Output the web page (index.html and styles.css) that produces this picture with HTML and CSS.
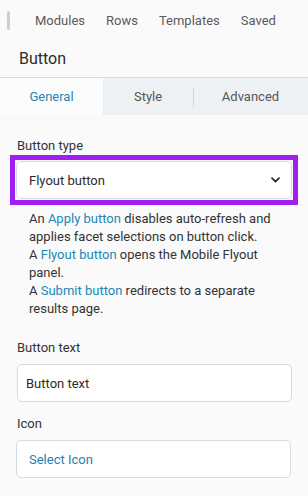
FILE: index.html
```html
<!DOCTYPE html>
<html lang="en">
<head>
<meta charset="utf-8">
<title>Button settings</title>
<link rel="stylesheet" href="styles.css">
</head>
<body>
<div class="panel">
  <nav class="topbar">
    <span class="handle"></span>
    <a class="top-link">Modules</a>
    <a class="top-link">Rows</a>
    <a class="top-link">Templates</a>
    <a class="top-link">Saved</a>
  </nav>
  <h1 class="title">Button</h1>
  <div class="tabs">
    <div class="tab tab-active">General</div>
    <div class="tab">Style</div>
    <div class="tab tab-sep">Advanced</div>
  </div>
  <div class="content">
    <div class="field">
      <label class="label">Button type</label>
      <div class="highlight">
        <div class="select">
          <span>Flyout button</span>
          <svg class="chev" width="9" height="6" viewBox="0 0 9 6"><path d="M1 1.2 L4.5 4.6 L8 1.2" fill="none" stroke="#2a2a2a" stroke-width="1.7" stroke-linecap="round" stroke-linejoin="round"/></svg>
        </div>
      </div>
      <p class="desc">An <a class="lnk">Apply button</a> disables auto-refresh and applies facet selections on button click.<br>A <a class="lnk">Flyout button</a> opens the Mobile Flyout panel.<br>A <a class="lnk">Submit button</a> redirects to a separate results page.</p>
    </div>
    <div class="field field-text">
      <label class="label">Button text</label>
      <div class="input input-text">Button text</div>
    </div>
    <div class="field field-icon">
      <label class="label">Icon</label>
      <div class="input input-icon">Select Icon</div>
    </div>
  </div>
</div>
</body>
</html>
```

FILE: styles.css
```css
* { box-sizing: border-box; }
html, body { margin: 0; padding: 0; }
body {
  background: #fafafa;
  font-family: Roboto, "Liberation Sans", sans-serif;
  font-size: 13px;
  color: #333;
  width: 308px;
  height: 496px;
  overflow: hidden;
}
.topbar {
  height: 40px;
  display: flex;
  align-items: center;
  padding-left: 7px;
}
.handle {
  flex: none;
  display: block;
  width: 3px;
  height: 19px;
  border-radius: 2px;
  background: #c8cfd8;
  margin-right: 25px;
}
.top-link {
  color: #5a5a5a;
  font-size: 13px;
  margin-right: 21px;
}
.title {
  margin: 0;
  height: 37px;
  line-height: 37px;
  padding-left: 19px;
  font-size: 16px;
  font-weight: 400;
  color: #2b2b2b;
}
.tabs {
  display: grid;
  grid-template-columns: 103px 90px 1fr;
  border-top: 1px solid #d5dce5;
  height: 38px;
}
.tab {
  background: #eef1f4;
  color: #555;
  display: flex;
  align-items: center;
  justify-content: center;
  font-size: 13px;
  position: relative;
}
.tab-active {
  background: #fcfcfd;
  color: #1c88b8;
}
.tab-sep::before {
  content: "";
  position: absolute;
  left: 0;
  top: 10px;
  height: 19px;
  width: 1px;
  background: #cdd5df;
}
.content {
  padding: 0 16px;
}
.label {
  display: block;
  line-height: 18px;
  font-size: 13px;
  color: #333;
  padding-left: 1px;
}
.field { margin-top: 22px; }
.field-text { margin-top: 21px; }
.field-icon { margin-top: 13px; }
.field .label { margin-bottom: 0; }
.field-text .label, .field-icon .label { margin-bottom: 7px; }
.highlight {
  margin: 0 -6px;
  border: 5px solid #a01ff0;
  padding: 1px;
}
.select {
  height: 38px;
  background: #fff;
  border: 1px solid #d3dbe6;
  border-radius: 5px;
  display: flex;
  align-items: center;
  justify-content: space-between;
  padding: 0 11px 0 12px;
  color: #2b2b2b;
}
.chev { display: block; }
.desc {
  margin: 5px 0 0;
  padding: 0 10px 0 13px;
  line-height: 18px;
  color: #333;
}
.lnk { color: #1c88b8; }
.input {
  height: 38px;
  background: #fff;
  border: 1px solid #d3dbe6;
  border-radius: 5px;
  display: flex;
  align-items: center;
  width: 275px;
}
.input-text {
  margin-left: 1px;
  padding-left: 8px;
  color: #2b2b2b;
}
.input-icon {
  padding-left: 12px;
  color: #1f7fb0;
}
```
